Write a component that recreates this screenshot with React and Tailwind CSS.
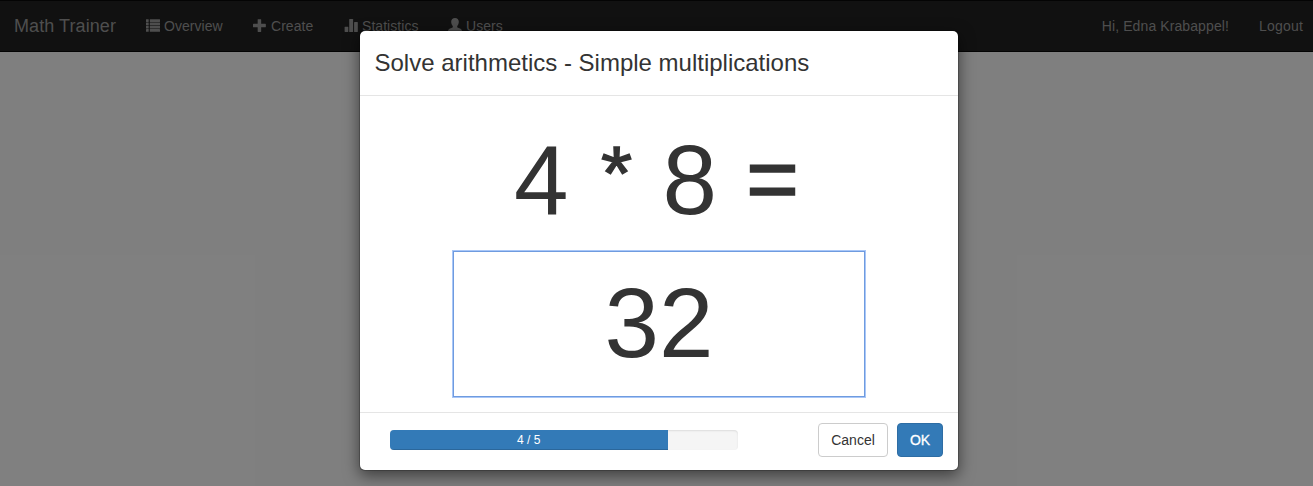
function Glyph({ children }) {
  return (
    <svg viewBox="0 0 14 14" className="mr-1 h-[14px] w-[14px] shrink-0 overflow-visible fill-current">
      {children}
    </svg>
  );
}

const ListIcon = () => (
  <Glyph>
    {[0.2, 3.5, 6.8, 10.1].map((y) => (
      <g key={y}>
        <rect x="0" y={y} width="2.7" height="2.7" rx="0.3" />
        <rect x="3.8" y={y} width="10.2" height="2.7" rx="0.3" />
      </g>
    ))}
  </Glyph>
);

const PlusIcon = () => (
  <Glyph>
    <g transform="translate(0 13) scale(0.0116667 -0.0116667)">
      <path d="M450 1100h200q21 0 35.500-14.500t14.500-35.500v-350h350q21 0 35.500-14.500t14.500-35.500v-200q0-21-14.500-35.500t-35.500-14.500h-350v-350q0-21-14.500-35.500t-35.500-14.500h-200q-21 0-35.500 14.500t-14.500 35.500v350h-350q-21 0-35.500 14.500t-14.500 35.500v200q0 21 14.500 35.500t35.500 14.500h350v350q0 21 14.500 35.500t35.500 14.500z" />
    </g>
  </Glyph>
);

const StatsIcon = () => (
  <Glyph>
    <rect x="0.6" y="7.7" width="3.7" height="5.3" rx="0.4" />
    <rect x="5.2" y="0" width="3.9" height="13" rx="0.6" />
    <rect x="10.100" y="3" width="3.700" height="10" rx="0.6" />
  </Glyph>
);

const UserIcon = () => (
  <Glyph>
    <g transform="translate(0 -1)">
      <path d="M7 0C4.700 0 3.200 1.400 3.200 3.700C3.200 5.600 3.900 7 4.800 8V8.700C4.800 9.300 4.500 9.500 4 9.800L1.500 10.800C.6 11.300.1 11.900.1 13H13.900C13.900 11.900 13.400 11.300 12.500 10.800L10 9.800C9.500 9.500 9.200 9.300 9.200 8.700V8C10.100 7 10.800 5.600 10.800 3.700C10.800 1.400 9.300 0 7 0Z" />
    </g>
  </Glyph>
);

const links = [
  { label: "Overview", Icon: ListIcon, width: "w-[107px]" },
  { label: "Create", Icon: PlusIcon, width: "w-[91px]" },
  { label: "Statistics", Icon: StatsIcon, width: "w-[104px]" },
  { label: "Users", Icon: UserIcon, width: "w-[60px]" },
];

function Navbar() {
  return (
    <nav className="flex h-[52px] items-center border-y border-[#080808] bg-[#222] pr-[10px] pl-[14px] text-[14px] leading-5 text-[#9d9d9d]">
      <a className="w-[132px] text-[18px] tracking-[0.08px]">Math Trainer</a>
      <div className="flex">
        {links.map(({ label, Icon, width }) => (
          <a key={label} className={`flex items-center tracking-[0.05px] ${width}`}>
            <Icon />
            {label}
          </a>
        ))}
      </div>
      <div className="ml-auto flex gap-[30px]">
        <span className="tracking-[0.1px]">Hi, Edna Krabappel!</span>
        <a className="tracking-[0.2px]">Logout</a>
      </div>
    </nav>
  );
}

function ExerciseModal() {
  return (
    <div className="w-[600px] rounded-[6px] border border-black/20 bg-white bg-clip-padding text-[#333] shadow-[0_5px_15px_rgba(0,0,0,0.5)]">
      <header className="h-[65px] border-b border-[#e5e5e5] px-[15px] pt-[15px]">
        <h3 className="-ml-[0.5px] text-[24px] leading-[34px]">Solve arithmetics - Simple multiplications</h3>
      </header>
      <div className="flex h-[316px] flex-col items-center pt-[14px] text-[98px] leading-[140px]">
        <div className="flex h-[141px] items-baseline gap-[27px] pr-[3px]">
          <span>4</span>
          <span className="w-[40px] translate-x-[1px] -translate-y-[14px] scale-y-95 text-center text-[80px] [-webkit-text-stroke:1.5px_#333]">*</span>
          <span>8</span>
          <span className="w-[57px] -translate-y-[4px] text-center text-[90px] [-webkit-text-stroke:1.7px_#333]">=</span>
        </div>
        <input
          defaultValue="32"
          aria-label="Answer"
          className="h-[146px] w-[412px] border border-[#6f9bdf] bg-white pb-[1px] text-center leading-[140px] shadow-[0_0_0_1px_#a9c7f8] outline-none"
        />
      </div>
      <footer className="flex h-[58px] items-start border-t border-[#e5e5e5] pt-[10px] pr-[15px] pl-[30px] text-[14px] leading-5">
        <div className="mt-[7px] h-5 w-[348px] overflow-hidden rounded-[4px] bg-[#f5f5f5] shadow-[inset_0_1px_2px_rgba(0,0,0,0.1)]">
          <div className="h-full w-4/5 bg-[#337ab7] pr-px text-center text-[12px] text-white shadow-[inset_0_-1px_0_rgba(0,0,0,0.15)]">
            4 / 5
          </div>
        </div>
        <div className="ml-auto flex gap-[9px]">
          <button className="h-[34px] w-[70px] rounded-[4px] border border-[#ccc] bg-white">Cancel</button>
          <button className="h-[34px] w-[46px] rounded-[4px] border border-[#2e6da4] bg-[#337ab7] text-white [-webkit-text-stroke:0.3px_white]">OK</button>
        </div>
      </footer>
    </div>
  );
}

export default function App() {
  return (
    <div className="relative h-[486px] overflow-hidden bg-white font-['Liberation_Sans',Arial,sans-serif]">
      <Navbar />
      <div className="absolute inset-0 flex items-start bg-black/50 pt-[30px] pl-[359px]">
        <ExerciseModal />
      </div>
    </div>
  );
}
